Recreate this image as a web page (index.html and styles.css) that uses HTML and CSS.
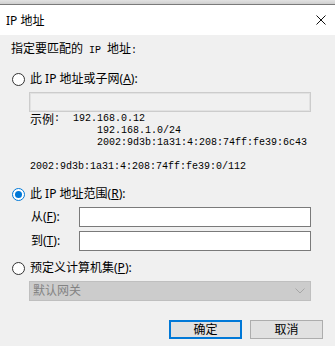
FILE: index.html
```html
<!DOCTYPE html>
<html lang="zh-CN">
<head>
<meta charset="utf-8">
<title>IP 地址</title>
<link rel="stylesheet" href="styles.css">
</head>
<body>
<div class="win">
  <div class="topband"></div>
  <div class="titlebar">
    <span class="title">IP 地址</span>
    <svg class="close" width="10" height="10" viewBox="0 0 10 10"><path d="M0.5 0.5 L9.5 9.5 M9.5 0.5 L0.5 9.5" stroke="#111" stroke-width="1" fill="none"/></svg>
  </div>
  <div class="content">
    <div class="intro">指定要匹配的<span class="mono"> IP </span>地址<span class="mono">:</span></div>

    <div class="radio-row r1">
      <span class="radio"></span>
      <span class="rlabel">此 IP 地址或子网(<u>A</u>):</span>
    </div>
    <div class="tb tb-disabled tb-wide"></div>

    <div class="examples">
      <div class="ex-line"><span class="cjk">示例</span><span>:</span><span class="v1">192.168.0.12</span></div>
      <div class="ex-line indent">192.168.1.0/24</div>
      <div class="ex-line indent">2002:9d3b:1a31:4:208:74ff:fe39:6c43</div>
      <div class="ex-line blank"></div>
      <div class="ex-line">2002:9d3b:1a31:4:208:74ff:fe39:0/112</div>
    </div>

    <div class="radio-row r2">
      <span class="radio checked"></span>
      <span class="rlabel">此 IP 地址范围(<u>R</u>):</span>
    </div>
    <div class="field-row fr1">
      <span class="flabel">从(<u>F</u>):</span>
      <div class="tb tb-range"></div>
    </div>
    <div class="field-row fr2">
      <span class="flabel">到(<u>T</u>):</span>
      <div class="tb tb-range"></div>
    </div>

    <div class="radio-row r3">
      <span class="radio"></span>
      <span class="rlabel">预定义计算机集(<u>P</u>):</span>
    </div>
    <div class="combo">
      <span class="combo-text">默认网关</span>
      <svg class="chev" width="10" height="6" viewBox="0 0 10 6"><path d="M0.5 0.5 L5 5 L9.5 0.5" stroke="#a6a6a6" stroke-width="1" fill="none"/></svg>
    </div>

    <div class="buttons">
      <div class="btn btn-default">确定</div>
      <div class="btn">取消</div>
    </div>
  </div>
</div>
</body>
</html>
```
FILE: styles.css
```css
html, body {
  margin: 0;
  padding: 0;
  width: 335px;
  height: 346px;
  overflow: hidden;
  background: #f0f0f0;
}
.win {
  font-family: "Noto Sans", "Noto Sans CJK SC", sans-serif;
  font-size: 12px;
  color: #000;
}
.topband {
  height: 4px;
  background: linear-gradient(#e2e2e2, #cfcfcf);
  border-bottom: 1px solid #7a7a7a;
}
.titlebar {
  height: 30px;
  background: #fff;
  display: flex;
  align-items: center;
  justify-content: space-between;
  padding: 0 9px 0 6px;
}
.title {
  line-height: 16px;
  padding-top: 1px;
}
.close {
  display: block;
}
.content {
  display: flex;
  flex-direction: column;
}
.intro {
  font-family: "Noto Sans CJK SC", sans-serif;
  line-height: 12px;
  height: 12px;
  margin: 7px 0 0 11px;
  white-space: pre;
}
.mono {
  font-family: "Liberation Mono", monospace;
  font-size: 10px;
}
.radio-row {
  display: flex;
  align-items: center;
  height: 16px;
  padding-left: 12px;
  gap: 5px;
}
.r1 { margin-top: 17px; }
.r2 { margin-top: 13px; }
.r3 { margin-top: 9px; }
.radio {
  box-sizing: border-box;
  width: 13px;
  height: 13px;
  border: 1px solid #333;
  border-radius: 50%;
  background: #fff;
  display: flex;
  align-items: center;
  justify-content: center;
}
.radio.checked {
  border-color: #0078d7;
}
.radio.checked::after {
  content: "";
  width: 7px;
  height: 7px;
  border-radius: 50%;
  background: #0078d7;
}
.rlabel {
  line-height: 16px;
  white-space: pre;
}
.tb {
  box-sizing: border-box;
  height: 20px;
  background: #fff;
  border: 1px solid #7a7a7a;
}
.tb-disabled {
  background: #f0f0f0;
  border-color: #cccccc;
  box-shadow: inset 0 0 0 1px #e2e2e2;
}
.tb-wide {
  margin: 5px 0 0 29px;
  width: 282px;
}
.examples {
  margin: 1px 0 0 30px;
  font-family: "Liberation Mono", monospace;
  font-size: 10px;
  line-height: 12px;
}
.ex-line {
  height: 12px;
  display: flex;
  align-items: center;
  white-space: nowrap;
}
.ex-line.indent {
  padding-left: 67px;
}
.cjk {
  font-family: "Noto Sans CJK SC", sans-serif;
  font-size: 12px;
  line-height: 12px;
}
.v1 {
  margin-left: 13px;
}
.field-row {
  display: flex;
  align-items: center;
  height: 20px;
  padding-left: 31px;
}
.fr1 { margin-top: 5px; }
.fr2 { margin-top: 4px; }
.flabel {
  width: 48px;
  line-height: 16px;
  white-space: pre;
}
.tb-range {
  width: 232px;
}
.combo {
  box-sizing: border-box;
  margin: 5px 0 0 29px;
  width: 282px;
  height: 20px;
  background: #cccccc;
  border: 1px solid #bfbfbf;
  display: flex;
  align-items: center;
  justify-content: space-between;
  padding: 0 5px 0 3px;
}
.combo-text {
  color: #838383;
  line-height: 16px;
}
.chev {
  display: block;
}
.buttons {
  display: flex;
  justify-content: flex-end;
  gap: 8px;
  margin: 19px 12px 0 0;
}
.btn {
  box-sizing: border-box;
  width: 73px;
  height: 19px;
  background: #e1e1e1;
  border: 1px solid #adadad;
  display: flex;
  align-items: center;
  justify-content: center;
  line-height: 14px;
}
.btn-default {
  border: 2px solid #0078d7;
}
```
